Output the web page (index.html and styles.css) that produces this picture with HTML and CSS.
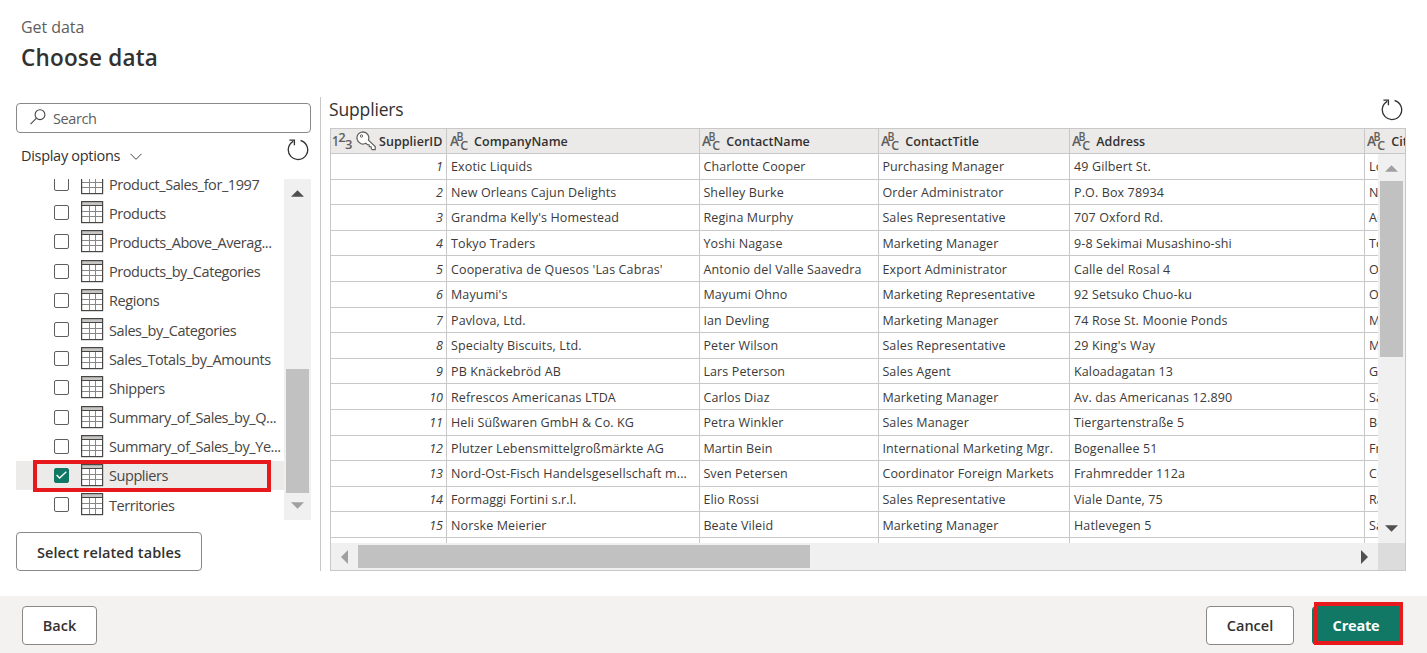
FILE: index.html
```html
<!DOCTYPE html>
<html lang="en">
<head>
<meta charset="utf-8">
<title>Get data</title>
<link rel="stylesheet" href="styles.css">
</head>
<body>
<svg class="defs" width="0" height="0">
  <symbol id="i-table" viewBox="0 0 23 23">
    <rect x="0.5" y="0.5" width="21" height="21" fill="#fff"/>
    <rect x="1" y="1" width="20" height="3.5" fill="#c8c6c4"/>
    <path d="M8.5 5v16M14.5 5v16M1 10.5h20M1 15.5h20" fill="none" stroke="#8a8886"/>
    <path d="M1 4.5h20" stroke="#484644"/>
    <rect x="0.6" y="0.6" width="21" height="21" fill="none" stroke="#484644" stroke-width="1.2"/>
  </symbol>
  <symbol id="i-refresh" viewBox="0 0 22 22">
    <path d="M13.6 1.5A9.7 9.7 0 1 1 6.2 2.4M2.4 1.2h5v5" fill="none" stroke="#323130" stroke-width="1.3"/>
  </symbol>
  <symbol id="i-abc" viewBox="0 0 19 20" overflow="visible">
    <g class="glyph"><text x="0" y="15" font-size="14" textLength="9" lengthAdjust="spacingAndGlyphs">A</text><text x="6.5" y="10" font-size="12.5" textLength="7" lengthAdjust="spacingAndGlyphs">B</text><text x="10.3" y="18.7" font-size="13" textLength="8" lengthAdjust="spacingAndGlyphs">C</text></g>
  </symbol>
  <symbol id="i-123" viewBox="0 0 21 20" overflow="visible">
    <g class="glyph"><text x="0" y="15" font-size="14.5" textLength="7" lengthAdjust="spacingAndGlyphs">1</text><text x="6.3" y="11" font-size="13" textLength="7.5" lengthAdjust="spacingAndGlyphs">2</text><text x="13" y="17.5" font-size="13" textLength="7.5" lengthAdjust="spacingAndGlyphs">3</text></g>
  </symbol>
  <symbol id="i-key" viewBox="0 0 20 20">
    <path d="M7 .8a6.1 6.1 0 1 0 2.9 11.5l1.5 1.3 1.7.1.2 1.9 1.8.1.3 2.1.9.9h2.9v-3.1l-6.8-6.5A6.1 6.1 0 0 0 7 .8z" fill="#fff" stroke="#605e5c" stroke-width="1.2"/>
    <circle cx="5.5" cy="5" r="1.2" fill="none" stroke="#605e5c"/>
  </symbol>
  <symbol id="i-up" viewBox="0 0 14 7"><path d="M0 7L7 0l7 7z"/></symbol>
  <symbol id="i-down" viewBox="0 0 14 7"><path d="M0 0l7 7 7-7z"/></symbol>
</svg>

<header class="top">
  <div class="crumb">Get data</div>
  <h1 class="title">Choose data</h1>
</header>

<main class="main">
  <aside class="side">
    <div class="search">
      <svg width="16" height="16" viewBox="0 0 16 16" fill="none" stroke="#484644" stroke-width="1.1"><circle cx="10" cy="5.7" r="4.9"/><path d="M6.5 9.2L.5 15.2"/></svg>
      <span>Search</span>
    </div>
    <div class="options">
      <span class="options-label">Display options</span>
      <svg class="chev" width="12" height="8" viewBox="0 0 12 8" fill="none" stroke="#484644"><path d="M.5 .8L6 6.3 11.5 .8"/></svg>
      <svg class="refresh" width="22" height="22"><use href="#i-refresh"/></svg>
    </div>
    <div class="tree">
      <div class="items">
        <div class="item"><i class="box"></i><svg class="tbl"><use href="#i-table"/></svg><span>Product_Sales_for_1997</span></div>
        <div class="item"><i class="box"></i><svg class="tbl"><use href="#i-table"/></svg><span>Products</span></div>
        <div class="item"><i class="box"></i><svg class="tbl"><use href="#i-table"/></svg><span>Products_Above_Averag...</span></div>
        <div class="item"><i class="box"></i><svg class="tbl"><use href="#i-table"/></svg><span>Products_by_Categories</span></div>
        <div class="item"><i class="box"></i><svg class="tbl"><use href="#i-table"/></svg><span>Regions</span></div>
        <div class="item"><i class="box"></i><svg class="tbl"><use href="#i-table"/></svg><span>Sales_by_Categories</span></div>
        <div class="item"><i class="box"></i><svg class="tbl"><use href="#i-table"/></svg><span>Sales_Totals_by_Amounts</span></div>
        <div class="item"><i class="box"></i><svg class="tbl"><use href="#i-table"/></svg><span>Shippers</span></div>
        <div class="item"><i class="box"></i><svg class="tbl"><use href="#i-table"/></svg><span>Summary_of_Sales_by_Q...</span></div>
        <div class="item"><i class="box"></i><svg class="tbl"><use href="#i-table"/></svg><span>Summary_of_Sales_by_Ye...</span></div>
        <div class="item selected"><i class="box checked"><svg width="11" height="8" viewBox="0 0 11 8" fill="none" stroke="#fff" stroke-width="1.3"><path d="M.6 4l3 3L10.3 .7"/></svg></i><svg class="tbl"><use href="#i-table"/></svg><span>Suppliers</span></div>
        <div class="item"><i class="box"></i><svg class="tbl"><use href="#i-table"/></svg><span>Territories</span></div>
      </div>
      <div class="vbar tree-bar">
        <svg class="arrow dark" width="13" height="7"><use href="#i-up"/></svg>
        <div class="thumb"></div>
        <svg class="arrow" width="13" height="7"><use href="#i-down"/></svg>
      </div>
      <div class="mark mark-item"></div>
    </div>
    <button class="btn related">Select related tables</button>
  </aside>

  <section class="preview">
    <div class="preview-head"><h2 class="name">Suppliers</h2><svg width="22" height="22"><use href="#i-refresh"/></svg></div>
    <div class="grid">
      <div class="row head">
        <div class="first"><svg width="21" height="20"><use href="#i-123"/></svg><svg class="key" width="20" height="20"><use href="#i-key"/></svg><span>SupplierID</span></div>
        <div><svg width="19" height="20"><use href="#i-abc"/></svg><span>CompanyName</span></div>
        <div><svg width="19" height="20"><use href="#i-abc"/></svg><span>ContactName</span></div>
        <div><svg width="19" height="20"><use href="#i-abc"/></svg><span>ContactTitle</span></div>
        <div><svg width="19" height="20"><use href="#i-abc"/></svg><span>Address</span></div>
        <div><svg width="19" height="20"><use href="#i-abc"/></svg><span>City</span></div>
      </div>
      <div class="view">
        <div class="rows">
          <div class="row"><div>1</div><div>Exotic Liquids</div><div>Charlotte Cooper</div><div>Purchasing Manager</div><div>49 Gilbert St.</div><div>London</div></div>
          <div class="row"><div>2</div><div>New Orleans Cajun Delights</div><div>Shelley Burke</div><div>Order Administrator</div><div>P.O. Box 78934</div><div>New Orleans</div></div>
          <div class="row"><div>3</div><div>Grandma Kelly's Homestead</div><div>Regina Murphy</div><div>Sales Representative</div><div>707 Oxford Rd.</div><div>Ann Arbor</div></div>
          <div class="row"><div>4</div><div>Tokyo Traders</div><div>Yoshi Nagase</div><div>Marketing Manager</div><div>9-8 Sekimai Musashino-shi</div><div>Tokyo</div></div>
          <div class="row"><div>5</div><div>Cooperativa de Quesos 'Las Cabras'</div><div>Antonio del Valle Saavedra</div><div>Export Administrator</div><div>Calle del Rosal 4</div><div>Oviedo</div></div>
          <div class="row"><div>6</div><div>Mayumi's</div><div>Mayumi Ohno</div><div>Marketing Representative</div><div>92 Setsuko Chuo-ku</div><div>Osaka</div></div>
          <div class="row"><div>7</div><div>Pavlova, Ltd.</div><div>Ian Devling</div><div>Marketing Manager</div><div>74 Rose St. Moonie Ponds</div><div>Melbourne</div></div>
          <div class="row"><div>8</div><div>Specialty Biscuits, Ltd.</div><div>Peter Wilson</div><div>Sales Representative</div><div>29 King's Way</div><div>Manchester</div></div>
          <div class="row"><div>9</div><div>PB Knäckebröd AB</div><div>Lars Peterson</div><div>Sales Agent</div><div>Kaloadagatan 13</div><div>Göteborg</div></div>
          <div class="row"><div>10</div><div>Refrescos Americanas LTDA</div><div>Carlos Diaz</div><div>Marketing Manager</div><div>Av. das Americanas 12.890</div><div>Sao Paulo</div></div>
          <div class="row"><div>11</div><div>Heli Süßwaren GmbH &amp; Co. KG</div><div>Petra Winkler</div><div>Sales Manager</div><div>Tiergartenstraße 5</div><div>Berlin</div></div>
          <div class="row"><div>12</div><div>Plutzer Lebensmittelgroßmärkte AG</div><div>Martin Bein</div><div>International Marketing Mgr.</div><div>Bogenallee 51</div><div>Frankfurt</div></div>
          <div class="row"><div>13</div><div>Nord-Ost-Fisch Handelsgesellschaft m...</div><div>Sven Petersen</div><div>Coordinator Foreign Markets</div><div>Frahmredder 112a</div><div>Cuxhaven</div></div>
          <div class="row"><div>14</div><div>Formaggi Fortini s.r.l.</div><div>Elio Rossi</div><div>Sales Representative</div><div>Viale Dante, 75</div><div>Ravenna</div></div>
          <div class="row"><div>15</div><div>Norske Meierier</div><div>Beate Vileid</div><div>Marketing Manager</div><div>Hatlevegen 5</div><div>Sandvika</div></div>
          <div class="row"><div></div><div></div><div></div><div></div><div></div><div></div></div>
        </div>
        <div class="vbar grid-bar">
          <svg class="arrow" width="13" height="7"><use href="#i-up"/></svg>
          <div class="thumb"></div>
          <svg class="arrow dark" width="13" height="7"><use href="#i-down"/></svg>
        </div>
      </div>
      <div class="hbar">
        <svg class="arrow" width="7" height="14" viewBox="0 0 7 14"><path d="M7 0v14L0 7z"/></svg>
        <div class="hthumb"></div>
        <svg class="arrow dark right" width="7" height="14" viewBox="0 0 7 14"><path d="M0 0v14l7-7z"/></svg>
        <div class="corner"></div>
      </div>
    </div>
  </section>
</main>

<footer class="foot">
  <button class="btn back">Back</button>
  <button class="btn cancel">Cancel</button>
  <button class="btn create">Create<span class="mark mark-create"></span></button>
</footer>
</body>
</html>
```
FILE: styles.css
```css
* { box-sizing: border-box; }
body {
  margin: 0;
  height: 653px;
  overflow: hidden;
  display: flex;
  flex-direction: column;
  background: #fff;
  color: #323130;
  font-family: "Open Sans", "Noto Sans", sans-serif;
}
svg { flex: none; display: block; }
.defs { position: absolute; }
.glyph { fill: #605e5c; font-family: "Open Sans", sans-serif; }

.top { height: 97px; padding: 16px 0 0 21px; }
.crumb { font-size: 16px; line-height: 22px; color: #605e5c; letter-spacing: -.05px; }
.title { margin: 4px 0 0; font-size: 22.5px; line-height: 32px; font-weight: 600; letter-spacing: .2px; }

.main { display: flex; height: 474px; }
.side { width: 321px; margin-right: 8px; padding: 6px 9px 0 16px; border-right: 1px solid #c8c8c8; }
.search {
  display: flex; align-items: center; gap: 7px;
  width: 295px; height: 30px; padding-left: 13px;
  border: 1px solid #8a8886; border-radius: 4px;
  font-size: 14.5px; color: #605e5c; letter-spacing: -.4px;
}
.search svg { margin-top: -3px; }
.options { display: flex; align-items: center; height: 46px; padding: 0 0 2px 5px; width: 295px; font-size: 14.5px; letter-spacing: -.3px; }
.chev { margin: 3px 0 0 10px; }
.refresh { margin: -10px 2px 0 auto; }
.tree { position: relative; display: flex; width: 295px; height: 341px; overflow: hidden; }
.items { width: 268px; margin-top: -10px; }
.item { display: flex; align-items: center; height: 29.2px; padding-left: 38px; font-size: 14.5px; letter-spacing: -.43px; white-space: nowrap; color: #484644; }
.item span { margin-top: 1px; }
.selected { background: #edebe9; }
.box { display: grid; place-items: center; flex: none; width: 15px; height: 15px; margin: 0 12px 0 0; border: 1px solid #605e5c; border-radius: 2px; background: #fff; }
.checked { background: #117865; border-color: #117865; }
.tbl { width: 23px; height: 23px; margin-right: 5px; }
.vbar { display: flex; flex-direction: column; align-items: center; width: 27px; background: #f0f0f0; }
.arrow { fill: #a0a0a0; }
.arrow.dark { fill: #505050; }
.thumb { width: 23px; background: #c1c1c1; }
.tree-bar { padding-top: 11px; }
.tree-bar .thumb { height: 124px; margin: 172px 0 9px; }
.mark { position: absolute; border: 4px solid #e8191c; }
.mark-item { left: 17px; top: 281px; width: 238px; height: 32px; }
.btn {
  display: flex; align-items: center; justify-content: center;
  height: 39px; padding: 0; border: 1px solid #8a8886; border-radius: 4px;
  background: #fff; color: #323130; font: 600 14.5px "Open Sans", sans-serif;
}
.related { width: 186px; margin-top: 12px; padding-top: 1px; letter-spacing: .1px; }

.preview { width: 1076px; margin-left: 1px; }
.preview-head { display: flex; justify-content: space-between; align-items: center; height: 31px; padding-right: 3px; }
.name { margin: -8px 0 0 -1px; font-size: 17.5px; font-weight: 400; letter-spacing: -.15px; }
.preview-head svg { margin-top: -5px; }
.grid { height: 443px; border: 1px solid #c8c8c8; }
.row { display: grid; grid-template-columns: 116px 253px 179px 191px 295px 120px; height: 25.6px; font-size: 12.5px; letter-spacing: .13px; white-space: nowrap; }
.row > div { display: flex; align-items: center; padding: 1px 0 0 4px; border-right: 1px solid #c8c8c8; border-bottom: 1px solid #c8c8c8; overflow: hidden; }
.row > div:nth-child(3), .row > div:nth-child(4) { padding-left: 3.4px; }
.rows .row > div:first-child { justify-content: flex-end; padding-right: 3px; font-style: italic; letter-spacing: 0; }
.head { height: 25px; background: #ebeae9; letter-spacing: .05px; font-weight: 600; overflow: hidden; }
.head > div { gap: 5px; padding: 0 0 0 3px; }
.head > div:nth-child(n+3) { padding-left: 2.3px; }
.head .first { gap: 3px; padding: 0 0 0 1px; }
.view { display: flex; height: 389px; }
.rows { width: 1047px; height: 389px; overflow: hidden; color: #3b3a39; }
.grid-bar { padding-top: 11px; }
.grid-bar .thumb { height: 176px; margin: 9px 0 168px; }
.hbar { display: flex; align-items: center; height: 27px; background: #f0f0f0; padding-left: 10px; }
.hthumb { width: 452px; height: 23px; margin-left: 10px; background: #c1c1c1; }
.right { margin-left: auto; margin-right: 10px; }
.corner { width: 27px; height: 27px; background: #dcdcdc; }

.foot { display: flex; align-items: flex-start; height: 57px; margin-top: 25px; padding: 10px 25px 0 22px; background: #f3f2f1; }
.back { width: 75px; }
.cancel { width: 88px; margin-left: auto; }
.create { position: relative; width: 90px; margin-left: 18px; padding-right: 2px; background: #117865; border-color: #117865; color: #fff; font-weight: 700; letter-spacing: -.2px; }
.mark-create { left: 1px; top: -5px; width: 89px; height: 43px; }
```
